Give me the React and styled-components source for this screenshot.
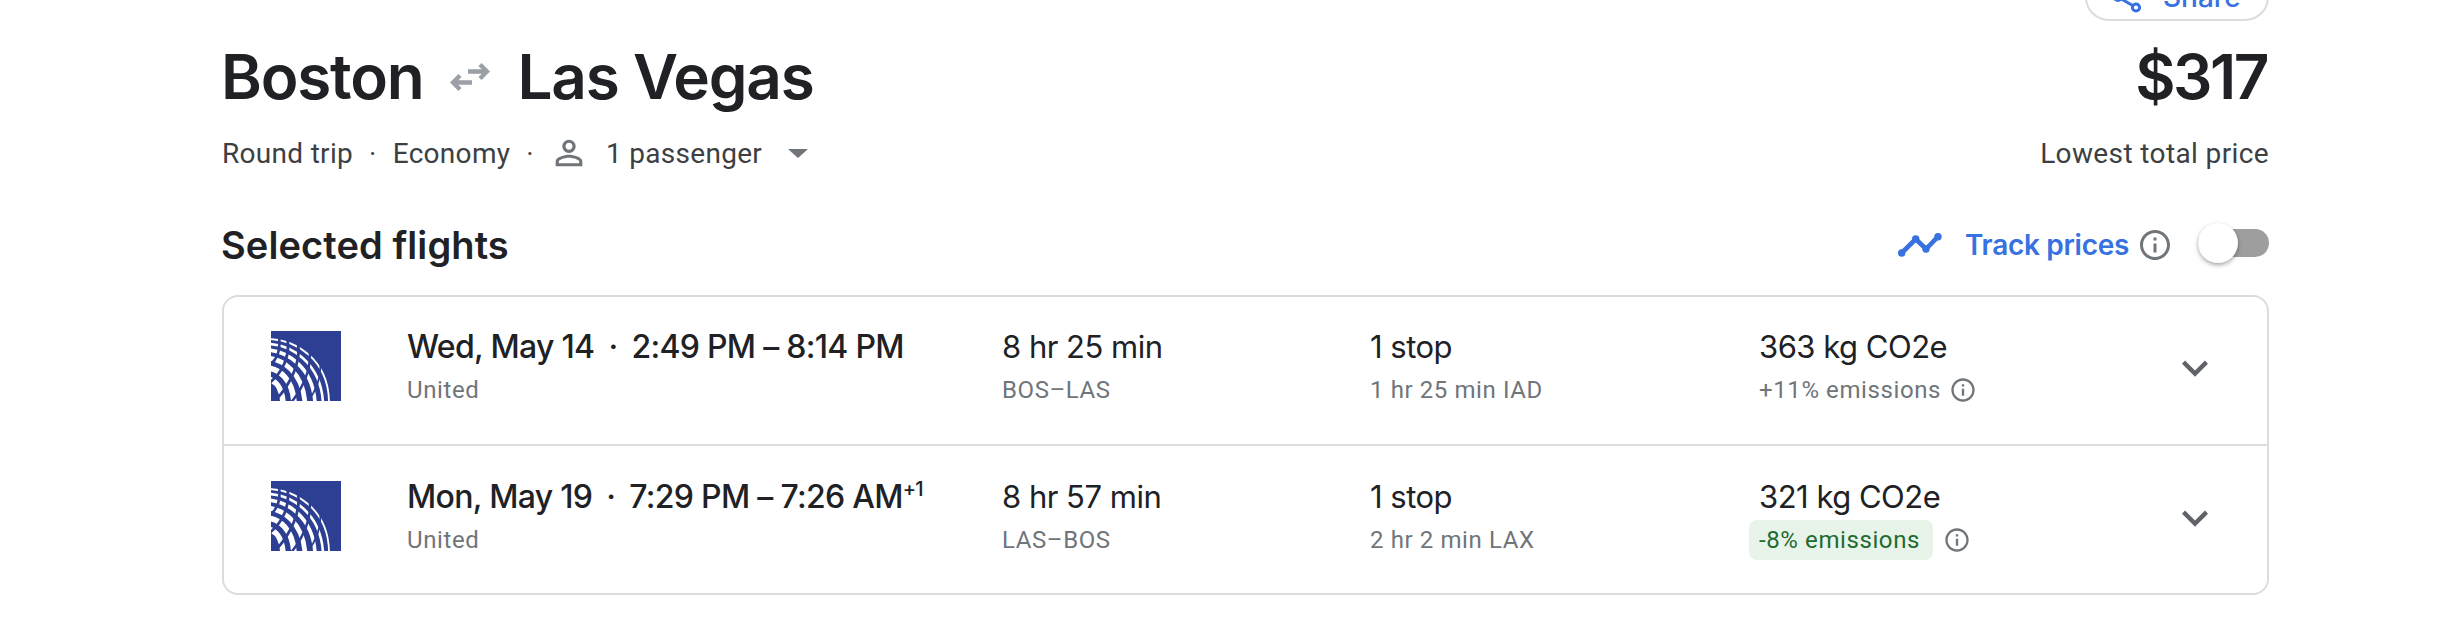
import styled, { createGlobalStyle } from "styled-components";

const flights = [
  {
    date: "Wed, May 14",
    times: "2:49 PM – 8:14 PM",
    duration: "8 hr 25 min",
    route: "BOS–LAS",
    stops: "1 stop",
    layover: "1 hr 25 min IAD",
    co2: "363 kg CO2e",
    emissions: "+11% emissions",
  },
  {
    date: "Mon, May 19",
    times: "7:29 PM – 7:26 AM",
    offset: "+1",
    duration: "8 hr 57 min",
    route: "LAS–BOS",
    stops: "1 stop",
    layover: "2 hr 2 min LAX",
    co2: "321 kg CO2e",
    emissions: "-8% emissions",
    low: true,
  },
];

const INFO =
  "M11 7h2v2h-2zm0 4h2v6h-2zm1-9C6.48 2 2 6.48 2 12s4.48 10 10 10 10-4.48 10-10S17.52 2 12 2zm0 18c-4.41 0-8-3.59-8-8s3.59-8 8-8 8 3.59 8 8-3.59 8-8 8z";

const InfoIcon = ({ size }) => (
  <InfoSvg viewBox="0 0 24 24" width={size} height={size}>
    <path d={INFO} />
  </InfoSvg>
);

// United globe, drawn as white bands cut by blue latitude lines
const Globe = () => (
  <GlobeSvg viewBox="0 0 70 70" width="70" height="70">
    <rect width="70" height="70" fill="#2d3f92" />
    <g fill="none">
      <path d="M-4 8 C24 8 58 28 58 72" stroke="#fff" strokeWidth="1.8" />
      <path d="M-4 13 C20 13 50 32 52 72" stroke="#fff" strokeWidth="2.6" />
      <path d="M-4 19 C16 20 42 36 44 72" stroke="#fff" strokeWidth="3.6" />
      <path d="M-4 27 C12 28 32 42 34 72" stroke="#fff" strokeWidth="4.8" />
      <path d="M-4 37 C8 38 22 48 23 72" stroke="#fff" strokeWidth="5.6" />
      <path d="M-4 48 C4 49 11 56 12 72" stroke="#fff" strokeWidth="5.6" />
      <path d="M8 6 C10 20 6 30 -4 36" stroke="#2d3f92" strokeWidth="2.6" />
      <path d="M16 6 C20 24 12 42 -4 54" stroke="#2d3f92" strokeWidth="2.8" />
      <path d="M26 8 C32 28 20 54 2 72" stroke="#2d3f92" strokeWidth="2.8" />
      <path d="M38 16 C42 36 32 58 18 74" stroke="#2d3f92" strokeWidth="2.4" />
      <path d="M49 30 C51 46 44 62 34 74" stroke="#2d3f92" strokeWidth="1.8" />
    </g>
  </GlobeSvg>
);

const App = () => (
  <Page>
    <GlobalStyle />
    <ShareRow>
      <ShareButton>
        <ShareSvg viewBox="0 0 24 24" width="36" height="36">
          <circle cx="18" cy="5" r="2.4" />
          <circle cx="6" cy="12" r="2.4" />
          <circle cx="18" cy="19" r="2.4" />
          <path d="M8.2 10.7l7.6-4.4M8.2 13.3l7.6 4.4" />
        </ShareSvg>
        Share
      </ShareButton>
    </ShareRow>

    <TitleRow>
      <Title>
        Boston
        <SwapSvg viewBox="0 0 40 30" width="40" height="30">
          <path d="M18 9.5H37M30 2.5L37 9.5L30 16.5" />
          <path d="M22 20.5H3M10 13.5L3 20.5L10 27.5" />
        </SwapSvg>
        Las Vegas
      </Title>
      <Price>$317</Price>
    </TitleRow>

    <SubRow>
      <Options>
        Round trip
        <Dot>·</Dot>
        Economy
        <Dot>·</Dot>
        <PersonSvg viewBox="0 0 24 24" width="40" height="40">
          <path d="M12 5.9c1.16 0 2.1.94 2.1 2.1s-.94 2.1-2.1 2.1S9.9 9.16 9.9 8s.94-2.1 2.1-2.1m0 9c2.97 0 6.1 1.46 6.1 2.1v1.1H5.9V17c0-.64 3.13-2.1 6.1-2.1M12 4C9.79 4 8 5.79 8 8s1.79 4 4 4 4-1.79 4-4-1.79-4-4-4zm0 9c-2.67 0-8 1.34-8 4v3h16v-3c0-2.66-5.33-4-8-4z" />
        </PersonSvg>
        1 passenger
        <Caret />
      </Options>
      <LowestLabel>Lowest total price</LowestLabel>
    </SubRow>

    <SectionRow>
      <SectionTitle>Selected flights</SectionTitle>
      <Track>
        <TrendSvg viewBox="0 0 44 24" width="44" height="24">
          <path d="M3.7 20L17.7 6L28 16L40 3.7" />
          <circle cx="3.7" cy="20" r="3.7" />
          <circle cx="17.7" cy="6" r="3.7" />
          <circle cx="28" cy="16" r="3.7" />
          <circle cx="40" cy="3.7" r="3.7" />
        </TrendSvg>
        <TrackLabel>Track prices</TrackLabel>
        <InfoIcon size={36} />
        <Toggle>
          <Thumb />
        </Toggle>
      </Track>
    </SectionRow>

    <Card>
      {flights.map((f) => (
        <Row key={f.date}>
          <Globe />
          <Cell>
            <Main>
              {f.date}
              <TimeDot>·</TimeDot>
              {f.times}
              {f.offset && <Sup>{f.offset}</Sup>}
            </Main>
            <Sub>United</Sub>
          </Cell>
          <Cell>
            <Plain>{f.duration}</Plain>
            <Sub>{f.route}</Sub>
          </Cell>
          <Cell>
            <Plain>{f.stops}</Plain>
            <Sub>{f.layover}</Sub>
          </Cell>
          <Cell>
            <Plain>{f.co2}</Plain>
            <EmissionRow>
              <Emission $low={f.low}>{f.emissions}</Emission>
              <InfoIcon size={28} />
            </EmissionRow>
          </Cell>
          <Chevron viewBox="0 0 24 24" width="52" height="52">
            <path d="M16.59 8.59L12 13.17 7.41 8.59 6 10l6 6 6-6z" />
          </Chevron>
        </Row>
      ))}
    </Card>
  </Page>
);

export default App;

const GlobalStyle = createGlobalStyle`
  html, body {
    margin: 0;
    background: #fff;
  }
  body {
    overflow: hidden;
  }
`;

const Page = styled.div`
  box-sizing: border-box;
  width: 2446px;
  height: 632px;
  padding: 0 177px 0 222px;
  overflow: hidden;
  font-family: Roboto, sans-serif;
  color: #202124;
`;

const ShareRow = styled.div`
  display: flex;
  justify-content: flex-end;
  height: 21px;
`;

const ShareButton = styled.div`
  box-sizing: border-box;
  display: flex;
  flex: none;
  align-items: center;
  gap: 18px;
  width: 184px;
  height: 48px;
  margin-top: -27px;
  padding-left: 22px;
  border: 2px solid #dadce0;
  border-radius: 24px;
  font-family: Inter, sans-serif;
  font-weight: 500;
  font-size: 28px;
  color: #3871e0;
`;

const ShareSvg = styled.svg`
  fill: none;
  stroke: #3871e0;
  stroke-width: 2;
`;

const TitleRow = styled.div`
  display: flex;
  justify-content: space-between;
  align-items: center;
  height: 80px;
  margin-top: 16px;
`;

const Title = styled.h1`
  display: flex;
  align-items: center;
  gap: 27px;
  margin: 0 0 0 -1px;
  font-family: Inter, sans-serif;
  font-weight: 600;
  font-size: 62px;
  letter-spacing: -1.2px;
  line-height: 80px;
`;

const SwapSvg = styled.svg`
  fill: none;
  stroke: #9aa0a6;
  stroke-width: 4.4;
`;

const Price = styled.div`
  margin-right: 2px;
  font-family: Inter, sans-serif;
  font-weight: 600;
  font-size: 62px;
  letter-spacing: -2.5px;
  line-height: 80px;
`;

const SubRow = styled.div`
  display: flex;
  justify-content: space-between;
  align-items: center;
  height: 40px;
  margin-top: 16px;
  font-size: 28px;
  letter-spacing: 0.3px;
  color: #3c4043;
`;

const Options = styled.div`
  display: flex;
  align-items: center;
`;

const LowestLabel = styled.span`
  letter-spacing: 0.38px;
`;

const Dot = styled.span`
  margin: 0 16px;
`;

const PersonSvg = styled.svg`
  fill: #70757a;
  margin-left: -1px;
  margin-right: 17px;
`;

const Caret = styled.span`
  width: 0;
  height: 0;
  margin-left: 26px;
  border-left: 10px solid transparent;
  border-right: 10px solid transparent;
  border-top: 9px solid #70757a;
`;

const SectionRow = styled.div`
  display: flex;
  justify-content: space-between;
  align-items: center;
  height: 40px;
  margin-top: 52px;
`;

const SectionTitle = styled.h2`
  margin: 0 0 0 -1px;
  font-family: Inter, sans-serif;
  font-weight: 600;
  font-size: 38px;
  letter-spacing: 0.1px;
`;

const Track = styled.div`
  display: flex;
  align-items: center;
`;

const TrendSvg = styled.svg`
  fill: #3871e0;
  stroke: #3871e0;
  margin-right: 23px;

  path {
    fill: none;
    stroke-width: 4.6;
  }
  circle {
    stroke: none;
  }
`;

const TrackLabel = styled.span`
  font-family: Inter, sans-serif;
  font-weight: 600;
  font-size: 28px;
  letter-spacing: -0.3px;
  color: #3871e0;
  margin-right: 8px;
`;

const InfoSvg = styled.svg`
  fill: #70757a;
  flex: none;
`;

const Toggle = styled.div`
  position: relative;
  width: 71px;
  height: 28px;
  margin: -4px 0 0 25px;
  border-radius: 14px;
  background: #9e9e9e;
`;

const Thumb = styled.div`
  position: absolute;
  left: 0;
  top: -6px;
  width: 40px;
  height: 40px;
  border-radius: 50%;
  background: #fff;
  box-shadow: 0 2px 4px rgba(0, 0, 0, 0.35);
`;

const Card = styled.div`
  box-sizing: border-box;
  width: 2047px;
  height: 300px;
  margin-top: 30px;
  border: 2px solid #dadce0;
  border-radius: 16px;
`;

const Row = styled.div`
  box-sizing: border-box;
  display: grid;
  grid-template-columns: 136px 595px 368px 389px 396px 52px;
  align-items: start;
  height: 149px;
  padding: 34px 0 0 47px;
  border-bottom: 2px solid #dadce0;

  & + & {
    padding-top: 35px;
    border-bottom: 0;
  }
`;

const GlobeSvg = styled.svg`
  display: block;
`;

const Cell = styled.div`
  display: flex;
  flex-direction: column;
  gap: 3px;
  margin-top: -4px;
`;

const Main = styled.div`
  font-family: Inter, sans-serif;
  font-weight: 500;
  font-size: 32px;
  letter-spacing: -0.7px;
  line-height: 40px;
  white-space: nowrap;
`;

const TimeDot = styled.span`
  margin: 0 14px;
`;

const Sup = styled.sup`
  font-size: 20px;
  line-height: 0;
  vertical-align: 12px;
`;

const Plain = styled.div`
  font-family: Inter, sans-serif;
  font-size: 31px;
  letter-spacing: -0.5px;
  line-height: 40px;
`;

const Sub = styled.div`
  font-size: 24px;
  letter-spacing: 0.6px;
  line-height: 40px;
  color: #70757a;
`;

const EmissionRow = styled.div`
  display: flex;
  align-items: center;
  height: 40px;
`;

const Emission = styled.span`
  box-sizing: border-box;
  height: 40px;
  font-size: 24px;
  letter-spacing: 0.6px;
  line-height: 40px;
  border-radius: 8px;
  color: ${(props) => (props.$low ? "#1e6b30" : "#70757a")};
  background: ${(props) => (props.$low ? "#e8f3ea" : "transparent")};
  padding: ${(props) => (props.$low ? "0 13px 0 10px" : "0")};
  margin-left: ${(props) => (props.$low ? "-10px" : "0")};
  margin-right: ${(props) => (props.$low ? "10px" : "8px")};
`;

const Chevron = styled.svg`
  fill: #5f6368;
  margin: 11px 0 0 14px;
`;
